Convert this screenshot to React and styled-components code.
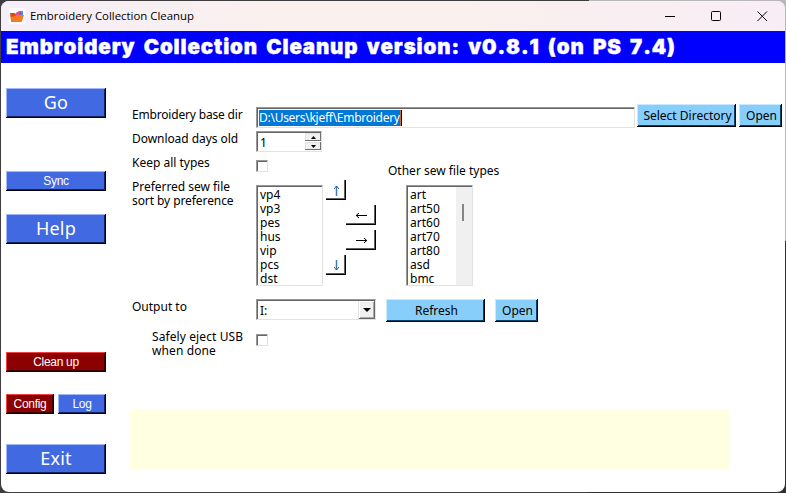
import React from 'react';
import styled, { createGlobalStyle, css } from 'styled-components';

const Global = createGlobalStyle`
  * { box-sizing: border-box; }
  body { margin: 0; overflow: hidden; background: #3c3a3d; }
`;

const Desktop = styled.div`
  width: 786px;
  height: 493px;
  padding: 1px;
  background: linear-gradient(to right, #3f3d40 75%, transparent 75%),
    linear-gradient(to bottom, #b9b7b9 241px, #303030 241px);
`;

const Window = styled.div`
  width: 784px;
  height: 491px;
  display: flex;
  flex-direction: column;
  background: #fff;
  border-radius: 8px;
  overflow: hidden;
  color: #000;
  font: 12px/14px 'Noto Sans', 'Open Sans', sans-serif;
`;

const TitleBar = styled.header`
  flex: 0 0 30px;
  display: flex;
  align-items: center;
  padding-left: 8px;
  background: linear-gradient(to right, #f6eef9, #faf0ee 35%, #faf0ee 60%, #f8edf5);
`;

const Title = styled.span`
  flex: 1;
  margin-left: 5px;
  font: 11.4px/16px 'Open Sans', sans-serif;
`;

const Caption = styled.div`
  width: 46px;
  display: flex;
  justify-content: center;
`;

const Banner = styled.h1`
  flex: 0 0 32px;
  margin: 0;
  padding-left: 5px;
  background: #00f;
  color: #fff;
  font: 900 20.5px/32px Inter, sans-serif;
  letter-spacing: 0.89px;
  word-spacing: 3.3px;
  font-kerning: none;
  white-space: nowrap;
  -webkit-text-stroke: 0.4px #fff;
`;

const Body = styled.main`
  flex: 1;
  display: flex;
`;

const Sidebar = styled.nav`
  flex: 0 0 130px;
  display: flex;
  flex-direction: column;
  padding: 25px 25px 0 5px;
`;

const tones = {
  blue: ['#4169e1', '#a0b8f8', '#14245c'],
  red: ['#8b0000', '#f04040', '#380000'],
  sky: ['#87cefa', '#c9e9ff', '#00466e'],
};

const Button = styled.button`
  flex: none;
  display: flex;
  align-items: center;
  justify-content: center;
  width: ${p => p.$w || 100}px;
  height: ${p => p.$h || 20}px;
  margin: 0;
  padding: 0;
  border: 0;
  font: inherit;
  white-space: nowrap;
  ${({ $tone }) => {
    const [face, light, shade] = tones[$tone];
    return css`
      background: ${face};
      color: ${$tone === 'sky' ? '#000' : '#fff'};
      box-shadow: inset -1px -1px #000, inset 1px 1px ${light}, inset -2px -2px ${shade};
    `;
  }}
`;

const BigButton = styled(Button)`
  height: 30px;
  padding: 0 0 2px;
  font-size: 18px;
  letter-spacing: 0.2px;
  margin-bottom: ${p => p.$gap || 0}px;
`;

const SmallButton = styled(Button)`
  font: 12px/14px 'Liberation Sans', Arial, sans-serif;
  letter-spacing: -0.3px;
  margin-bottom: ${p => p.$gap || 0}px;
`;

const FormButton = styled(Button)`
  height: 23px;
  margin-left: ${p => p.$left}px;
  padding: 0 0 0 2px;
`;

const Pair = styled.div`
  display: flex;
  gap: 4px;
  margin-bottom: 30px;
`;

const Form = styled.section`
  flex: 1;
  display: flex;
  flex-direction: column;
  padding-top: 41px;
`;

const Row = styled.div`
  flex: none;
  display: flex;
  height: ${p => p.$h}px;
`;

const Label = styled.label`
  flex: none;
  width: 125px;
  padding-left: ${p => p.$indent || 1}px;
  padding-top: ${p => p.$top || 0}px;
  letter-spacing: ${p => p.$track || 0}px;
  white-space: nowrap;
`;

const Line = styled.span`
  display: block;
  letter-spacing: ${p => p.$track}px;
`;

const sunken = css`
  background: #fff;
  border: 1px solid;
  border-color: #989898 #e2e2e2 #e2e2e2 #989898;
  box-shadow: inset 1px 1px #666;
`;

const Field = styled.div`
  ${sunken}
  flex: none;
  display: flex;
  width: ${p => p.$w}px;
  height: 21px;
  margin-top: ${p => p.$top || 0}px;
  padding: 2px 0 1px ${p => p.$left || 3}px;
  line-height: 18px;
`;

const Selection = styled.span`
  height: 16px;
  line-height: 16px;
  background: #0078d7;
  color: #fff;
  letter-spacing: -0.27px;
  border-right: 1px solid #d66a1e;
  box-shadow: 1px 0 #000;
`;

const Value = styled.span`
  flex: 1;
`;

const Spin = styled.div`
  display: grid;
  grid-template-rows: 8px 8px;
  gap: 1px;
  width: 16px;
  margin-top: -1px;
`;

const raised = css`
  display: flex;
  align-items: center;
  justify-content: center;
  background: #f0f0f0;
  box-shadow: inset -1px -1px #6a6a6a, inset 1px 1px #fff, inset -2px -2px #a8a8a8;
`;

const SpinButton = styled.div`
  ${raised}
  box-shadow: inset -1px -1px #707070, inset 1px 1px #e3e3e3;
`;

const DropButton = styled.div`
  ${raised}
  width: 17px;
  height: 18px;
  margin-top: -1px;
  border-left: 1px solid #e3e3e3;
`;

const Check = styled.div`
  ${sunken}
  width: 12px;
  height: 12px;
  margin-top: ${p => p.$top}px;
`;

const List = styled.div`
  ${sunken}
  flex: none;
  display: flex;
  width: 67px;
  height: 101px;
  margin-top: ${p => p.$top}px;
`;

const Items = styled.div`
  flex: 1;
  padding: 2px 0 0 3px;
`;

const Item = styled.div`
  height: 14px;
`;

const Scroll = styled.div`
  width: 16px;
  margin-top: 1px;
  padding: 17px 0 0 6px;
  background: #f0f0f0;
`;

const Thumb = styled.div`
  width: 2px;
  height: 17px;
  background: #858585;
`;

const Moves = styled.div`
  display: grid;
  grid-template-columns: 20px 30px;
  grid-template-rows: 20px 5px 20px 5px 20px 5px 20px;
  margin-left: 3px;
  width: 80px;
`;

const ArrowButton = styled.div`
  grid-column: ${p => p.$col};
  grid-row: ${p => p.$row};
  display: flex;
  align-items: center;
  justify-content: center;
  background: #fff;
  box-shadow: inset -1px -1px #000, inset -2px -2px #606060;
`;

const Other = styled.div`
  width: 120px;
  margin-top: -16px;
  display: flex;
  flex-direction: column;
`;

const OtherLabel = styled.span`
  margin-left: -18px;
  white-space: nowrap;
`;

const Output = styled.div`
  flex: none;
  width: 600px;
  height: 61px;
  margin-left: -1px;
  background: #ffffe1;
`;

const shapes = {
  up: ['M7.5 3V13', 'M5 6L7.5 3L10 6'],
  down: ['M7.5 2V12', 'M5 9L7.5 12L10 9'],
  left: ['M2 7.5H13', 'M5 5L2.2 7.5L5 10'],
  right: ['M2 7.5H13', 'M10 5L12.8 7.5L10 10'],
};

const Arrow = ({ dir }) => {
  const vertical = dir === 'up' || dir === 'down';
  const [shaft, head] = shapes[dir];
  return (
    <svg width="14" height="14" viewBox="0 0 14 14" fill="none">
      {vertical && <path d={shaft} stroke="#8cc8f4" strokeWidth="2" />}
      <path d={shaft} stroke={vertical ? '#3f77b8' : '#000'} />
      <path d={head} stroke={vertical ? '#2d5f9e' : '#000'} />
    </svg>
  );
};

const Triangle = ({ up, size = 5 }) => (
  <svg width={size} height={size === 5 ? 3 : 4} viewBox="0 0 6 3" preserveAspectRatio="none">
    <path d={up ? 'M0 3L3 0L6 3Z' : 'M0 0H6L3 3Z'} />
  </svg>
);

const AppIcon = () => (
  <svg width="16" height="16" viewBox="0 0 16 16">
    <rect width="16" height="16" rx="2" fill="#fff" />
    <path d="M1 5H6L7 7V13H2Z" fill="#d94d12" />
    <path d="M7 5L11 3L14 4L13 9H6Z" fill="#8b55c7" />
    <path d="M7 5L10 3V7H6Z" fill="#de568b" />
    <path d="M12 3H14V7H12Z" fill="#4b8ed8" />
    <path d="M2 9L6 8L8 7H15L13 13Q13 14 12 14H2Z" fill="#f47b20" />
  </svg>
);

const preferred = ['vp4', 'vp3', 'pes', 'hus', 'vip', 'pcs', 'dst'];
const others = ['art', 'art50', 'art60', 'art70', 'art80', 'asd', 'bmc'];

export default function App() {
  return (
    <Desktop>
      <Global />
      <Window>
        <TitleBar>
          <AppIcon />
          <Title>Embroidery Collection Cleanup</Title>
          <Caption>
            <svg width="11" height="11" stroke="#000"><path d="M0 5.5H10" /></svg>
          </Caption>
          <Caption>
            <svg width="11" height="11" fill="none" stroke="#000"><rect x=".5" y=".5" width="9" height="9" rx="1" /></svg>
          </Caption>
          <Caption>
            <svg width="11" height="11" stroke="#000"><path d="M.5.5L10 10M10 .5L.5 10" /></svg>
          </Caption>
        </TitleBar>
        <Banner>Embroidery Collection Cleanup version: v0.8.1 (on PS 7.4)</Banner>
        <Body>
          <Sidebar>
            <BigButton $tone="blue" $gap={53}>Go</BigButton>
            <SmallButton $tone="blue" $gap={23}>Sync</SmallButton>
            <BigButton $tone="blue" $gap={108}>Help</BigButton>
            <SmallButton $tone="red" $gap={22}>Clean up</SmallButton>
            <Pair>
              <SmallButton $tone="red" $w={48}>Config</SmallButton>
              <SmallButton $tone="blue" $w={48}>Log</SmallButton>
            </Pair>
            <BigButton $tone="blue">Exit</BigButton>
          </Sidebar>
          <Form>
            <Row $h={27}>
              <Label $top={4} $track={-0.18}>Embroidery base dir</Label>
              <Field $w={379} $top={3} $left={2}>
                <Selection>D:\Users\kjeff\Embroidery</Selection>
              </Field>
              <FormButton $tone="sky" $w={99} $left={2}>Select Directory</FormButton>
              <FormButton $tone="sky" $w={43} $left={3}>Open</FormButton>
            </Row>
            <Row $h={25}>
              <Label $top={1} $track={-0.06}>Download days old</Label>
              <Field $w={66}>
                <Value>1</Value>
                <Spin>
                  <SpinButton><Triangle up /></SpinButton>
                  <SpinButton><Triangle /></SpinButton>
                </Spin>
              </Field>
            </Row>
            <Row $h={24}>
              <Label>Keep all types</Label>
              <Check $top={4} />
            </Row>
            <Row $h={119}>
              <Label>
                <Line $track={-0.03}>Preferred sew file</Line>
                <Line $track={-0.08}>sort by preference</Line>
              </Label>
              <List $top={5}>
                <Items>{preferred.map(t => <Item key={t}>{t}</Item>)}</Items>
              </List>
              <Moves>
                <ArrowButton $col={1} $row={1}><Arrow dir="up" /></ArrowButton>
                <ArrowButton $col={2} $row={3}><Arrow dir="left" /></ArrowButton>
                <ArrowButton $col={2} $row={5}><Arrow dir="right" /></ArrowButton>
                <ArrowButton $col={1} $row={7}><Arrow dir="down" /></ArrowButton>
              </Moves>
              <Other>
                <OtherLabel>Other sew file types</OtherLabel>
                <List $top={7}>
                  <Items>{others.map(t => <Item key={t}>{t}</Item>)}</Items>
                  <Scroll><Thumb /></Scroll>
                </List>
              </Other>
            </Row>
            <Row $h={31}>
              <Label $top={1}>Output to</Label>
              <Field $w={120}>
                <Value>I:</Value>
                <DropButton><Triangle size={8} /></DropButton>
              </Field>
              <FormButton $tone="sky" $w={99} $left={10}>Refresh</FormButton>
              <FormButton $tone="sky" $w={43} $left={10}>Open</FormButton>
            </Row>
            <Row $h={79}>
              <Label $indent={21} $track={0.1}>
                Safely eject USB<br />when done
              </Label>
              <Check $top={4} />
            </Row>
            <Output />
          </Form>
        </Body>
      </Window>
    </Desktop>
  );
}
